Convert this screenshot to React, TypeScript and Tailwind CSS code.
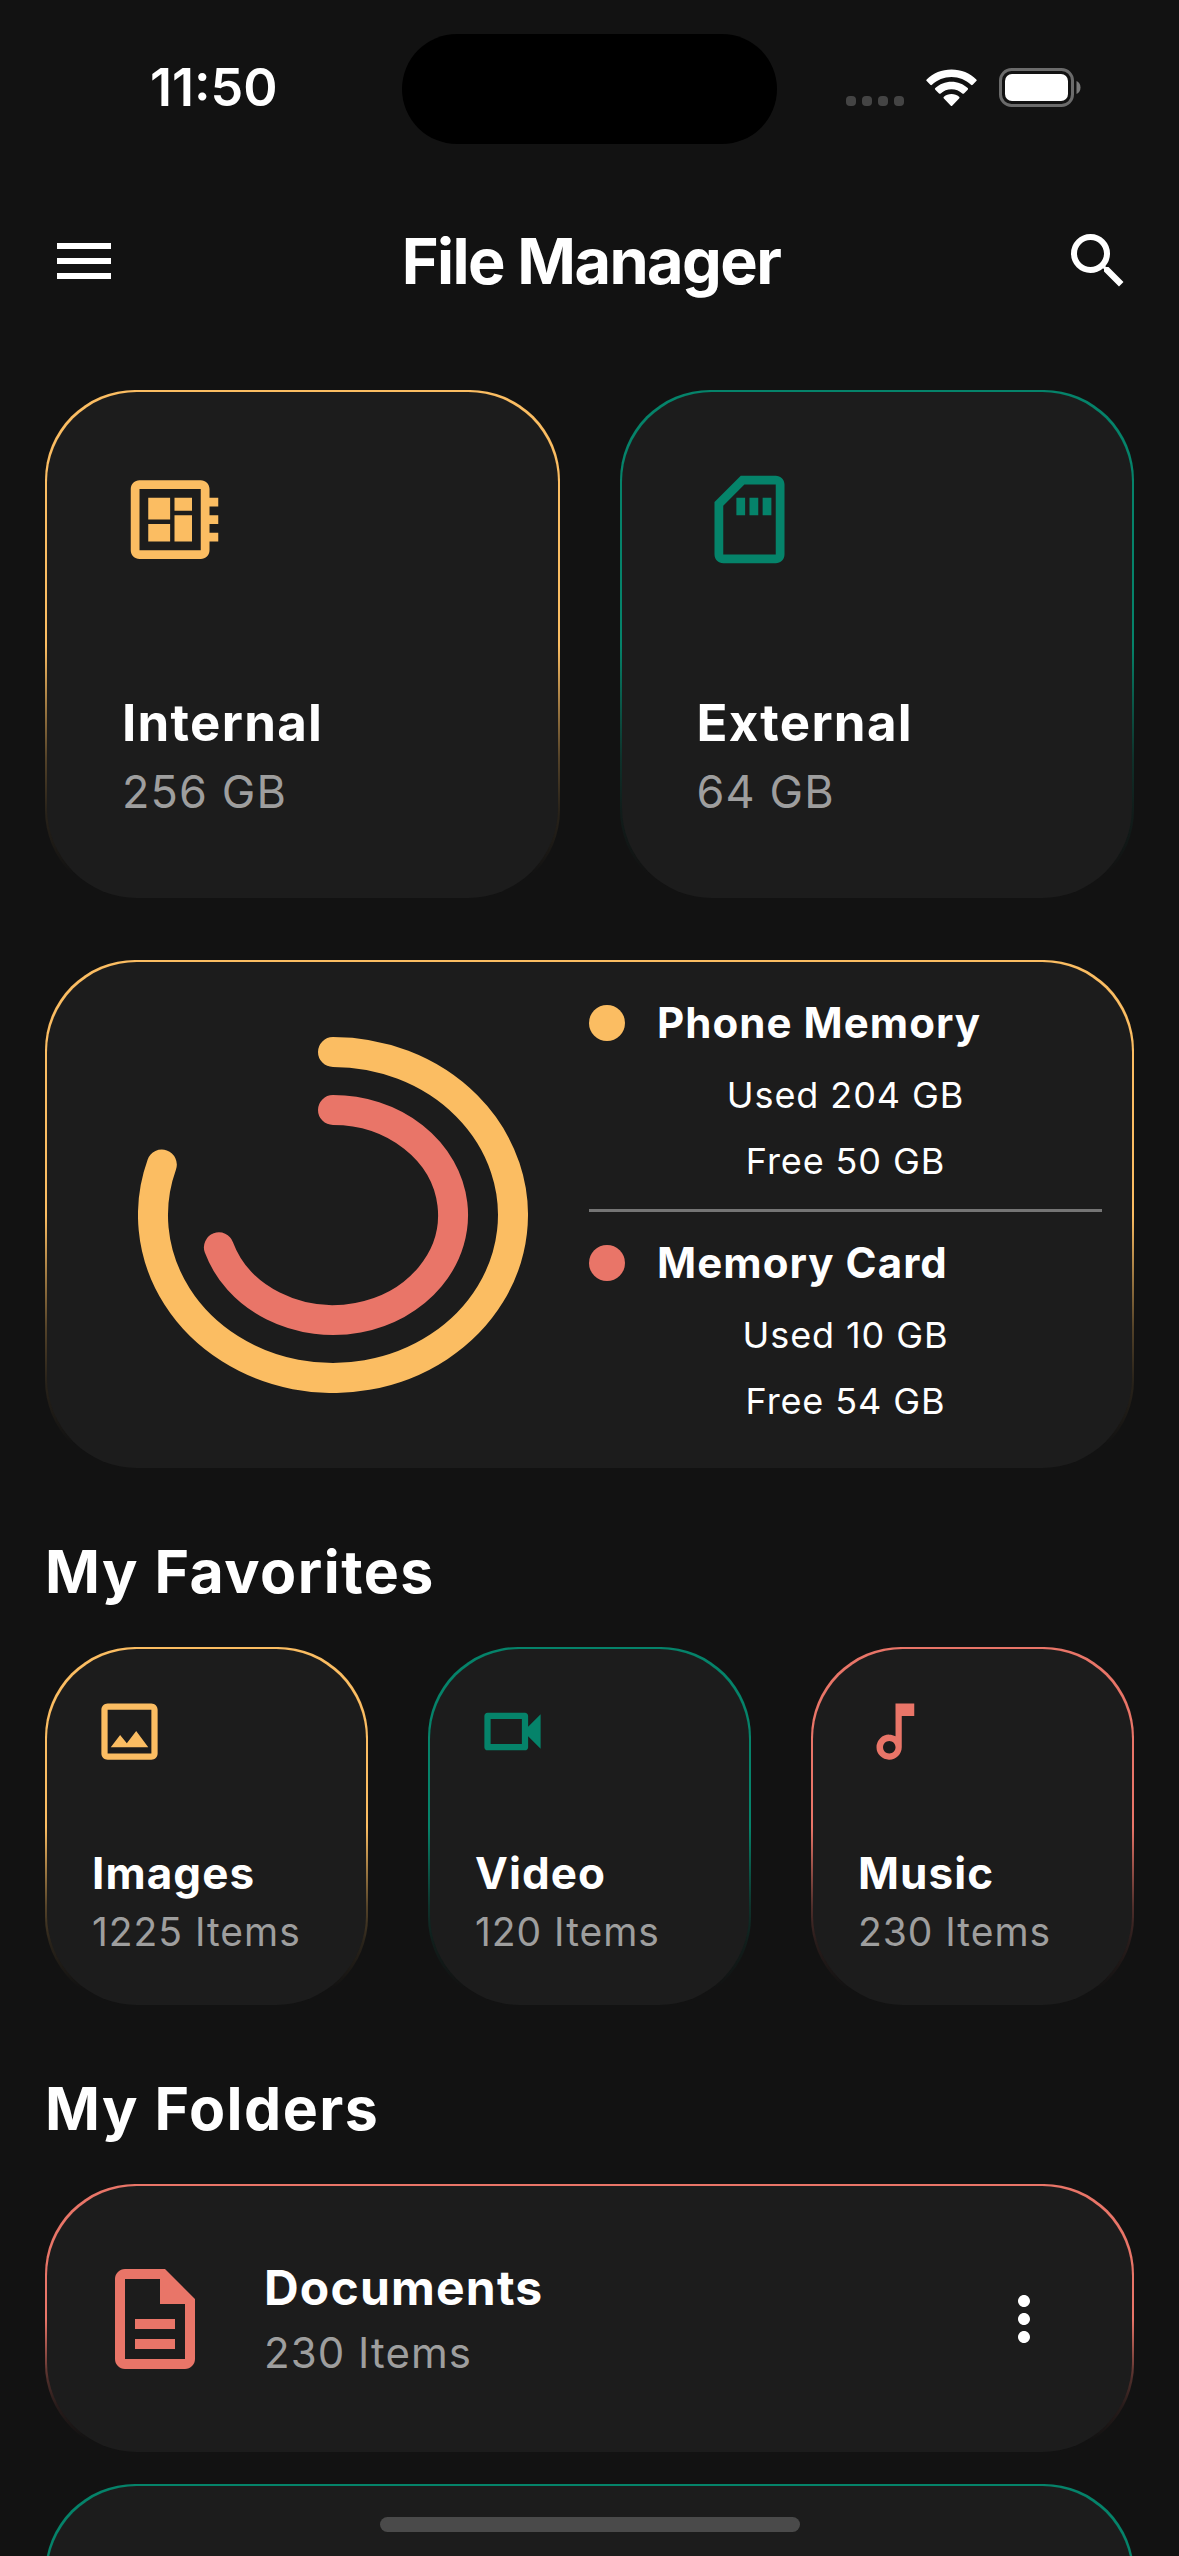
import type { ReactNode } from "react";
import type { IconType } from "react-icons";
import {
  MdMenu,
  MdMoreVert,
  MdOutlineDescription,
  MdOutlineDeveloperBoard,
  MdOutlineImage,
  MdOutlineMusicNote,
  MdOutlineSdCard,
  MdOutlineVideocam,
  MdSearch,
} from "react-icons/md";

type Tone = "amber" | "green" | "coral";

const toneBorder: Record<Tone, string> = {
  amber:
    "bg-[linear-gradient(to_bottom,#fbbd62_50%,#fbbd6299_62%,#fbbd6248_72%,#fbbd621a_82%,#fbbd6200_95%)]",
  green:
    "bg-[linear-gradient(to_bottom,#05836a_50%,#05836a99_62%,#05836a48_72%,#05836a1a_82%,#05836a00_95%)]",
  coral:
    "bg-[linear-gradient(to_bottom,#e97568_50%,#e9756899_62%,#e9756848_72%,#e975681a_82%,#e9756800_95%)]",
};

const toneText: Record<Tone, string> = {
  amber: "text-[#fbbd62]",
  green: "text-[#05836a]",
  coral: "text-[#e97568]",
};

const toneDot: Record<Tone, string> = {
  amber: "bg-[#fbbd62]",
  green: "bg-[#05836a]",
  coral: "bg-[#e97568]",
};

function Card({ tone, className, children }: { tone: Tone; className: string; children?: ReactNode }) {
  return (
    <div className={`rounded-[90px] p-[2px] ${toneBorder[tone]}`}>
      <div className={`rounded-[90px] bg-[#1c1c1c] ${className}`}>{children}</div>
    </div>
  );
}

function StatusBar() {
  return (
    <div className="grid h-[178px] grid-cols-3 items-start">
      <div className="pt-[58px] pl-[150px] text-[52px] leading-[60px] font-semibold">11:50</div>
      <div className="mt-[34px] h-[110px] w-[375px] justify-self-center rounded-full bg-black" />
      <div className="flex items-end justify-end gap-[22px] pt-[68px] pr-[98px]">
        <div className="flex gap-[6px] pb-px">
          <span className="size-[10px] rounded-[4px] bg-[#444444]" />
          <span className="size-[10px] rounded-[4px] bg-[#444444]" />
          <span className="size-[10px] rounded-[4px] bg-[#444444]" />
          <span className="size-[10px] rounded-[4px] bg-[#444444]" />
        </div>
        <svg width="51" height="38" viewBox="0 0 51 38" fill="white" aria-label="Wi-Fi">
          <path d="M25.500 0.500 C35.200 0.500 44 4.200 50.300 10.400 a1.200 1.200 0 0 1 0 1.700 L46.700 15.700 a1.200 1.200 0 0 1 -1.700 0 C39.800 10.800 33 7.900 25.500 7.900 C18 7.900 11.200 10.800 6 15.700 a1.200 1.200 0 0 1 -1.700 0 L0.700 12.100 a1.200 1.200 0 0 1 0 -1.700 C7 4.200 15.800 0.500 25.500 0.500 Z" />
          <path d="M25.500 12.800 C31.700 12.800 37.400 15.200 41.700 19.100 a1.200 1.200 0 0 1 0 1.700 L38 24.400 a1.200 1.200 0 0 1 -1.700 0 C33.400 21.800 29.600 20.200 25.500 20.200 C21.400 20.200 17.600 21.800 14.700 24.400 a1.200 1.200 0 0 1 -1.700 0 L9.300 20.800 a1.200 1.200 0 0 1 0 -1.700 C13.600 15.200 19.300 12.800 25.500 12.800 Z" />
          <path d="M25.500 25 C28.400 25 31 26 33.100 27.700 a1.200 1.200 0 0 1 0 1.800 L26.400 36.400 a1.200 1.200 0 0 1 -1.800 0 L17.900 29.500 a1.200 1.200 0 0 1 0 -1.800 C20 26 22.600 25 25.500 25 Z" />
        </svg>
        <svg width="82" height="39" viewBox="0 0 82 39" aria-label="Battery">
          <rect x="1.500" y="1.500" width="72" height="36" rx="11" fill="none" stroke="#6b6b6b" strokeWidth="3" />
          <rect x="6" y="6" width="63" height="27" rx="7" fill="white" />
          <path d="M77.500 13 C80 14 81.500 16.500 81.500 19.500 S80 25 77.500 26 Z" fill="#7a7a7a" />
        </svg>
      </div>
    </div>
  );
}

function AppBar() {
  return (
    <header className="flex items-center justify-between px-[45px] pt-[47px] pb-[93px]">
      <button type="button" aria-label="Open menu" className="pl-[3px]">
        <MdMenu className="size-[72px]" />
      </button>
      <h1 className="text-[63px] leading-[72px] font-bold tracking-tight">File Manager</h1>
      <button type="button" aria-label="Search">
        <MdSearch className="size-[72px]" />
      </button>
    </header>
  );
}

function StorageCard({ tone, icon: Icon, name, size }: { tone: Tone; icon: IconType; name: string; size: string }) {
  return (
    <Card tone={tone} className="flex flex-col px-[75px] pt-[75px] pb-[73px]">
      <Icon className={`size-[105px] ${toneText[tone]}`} />
      <h2 className="mt-[118px] text-[51px] leading-[66px] font-bold tracking-wide">{name}</h2>
      <p className="mt-[3px] text-[45px] leading-[66px] tracking-wide text-[#9e9e9e]">{size}</p>
    </Card>
  );
}

function UsageChart() {
  return (
    <svg width="390" height="356" viewBox="0 0 390 356" fill="none" strokeWidth="30" strokeLinecap="round" role="img" aria-label="Storage usage">
      <path d="M195 15 A180 163 0 1 1 23.800 127.600" stroke="#fbbd62" />
      <path d="M195 73 A120 105 0 1 1 80.900 210.400" stroke="#e97568" />
    </svg>
  );
}

function UsageBlock({ tone, name, used, free }: { tone: Tone; name: string; used: string; free: string }) {
  return (
    <div>
      <div className="flex items-center gap-[32px]">
        <span className={`size-[36px] rounded-full ${toneDot[tone]}`} />
        <h3 className="text-[42px] leading-[60px] font-bold tracking-wide">{name}</h3>
      </div>
      <div className="mt-[9px] text-center text-[36px] leading-[66px] tracking-wide">
        <p>{used}</p>
        <p>{free}</p>
      </div>
    </div>
  );
}

function FavoriteCard({ tone, icon: Icon, name, count }: { tone: Tone; icon: IconType; name: string; count: string }) {
  return (
    <Card tone={tone} className="flex flex-col px-[45px] pt-[45px] pb-[45px]">
      <Icon className={`size-[75px] ${toneText[tone]}`} />
      <h3 className="mt-[74px] text-[44px] leading-[60px] font-bold tracking-wide">{name}</h3>
      <p className="text-[39px] leading-[57px] tracking-wide whitespace-nowrap text-[#9e9e9e]">{count}</p>
    </Card>
  );
}

function SectionTitle({ children }: { children: ReactNode }) {
  return <h2 className="text-[59px] leading-[72px] font-bold tracking-wide">{children}</h2>;
}

export default function App() {
  return (
    <div className="relative h-screen overflow-hidden bg-[#121212] font-['Inter',sans-serif] text-white">
      <StatusBar />
      <AppBar />
      <main className="px-[45px]">
        <section className="grid grid-cols-2 gap-[60px]">
          <StorageCard tone="amber" icon={MdOutlineDeveloperBoard} name="Internal" size="256 GB" />
          <StorageCard tone="green" icon={MdOutlineSdCard} name="External" size="64 GB" />
        </section>

        <section className="mt-[60px]">
          <Card tone="amber" className="flex h-[506px] items-center pr-[30px]">
            <div className="flex flex-1 justify-center pl-[30px]">
              <UsageChart />
            </div>
            <div className="w-[513px] pb-[4px]">
              <UsageBlock tone="amber" name="Phone Memory" used="Used 204 GB" free="Free 50 GB" />
              <hr className="mt-[15px] mb-[21px] border-t-[3px] border-[#757575]" />
              <UsageBlock tone="coral" name="Memory Card" used="Used 10 GB" free="Free 54 GB" />
            </div>
          </Card>
        </section>

        <section className="mt-[66px]">
          <SectionTitle>My Favorites</SectionTitle>
          <div className="mt-[39px] grid grid-cols-3 gap-[60px]">
            <FavoriteCard tone="amber" icon={MdOutlineImage} name="Images" count="1225 Items" />
            <FavoriteCard tone="green" icon={MdOutlineVideocam} name="Video" count="120 Items" />
            <FavoriteCard tone="coral" icon={MdOutlineMusicNote} name="Music" count="230 Items" />
          </div>
        </section>

        <section className="mt-[66px]">
          <SectionTitle>My Folders</SectionTitle>
          <div className="mt-[39px] flex flex-col gap-[30px]">
            <Card tone="coral" className="flex h-[266px] items-center pr-[72px] pl-[48px]">
              <MdOutlineDescription className="size-[120px] text-[#e97568]" />
              <div className="ml-[49px] flex-1">
                <h3 className="text-[48px] leading-[66px] font-bold tracking-wide">Documents</h3>
                <p className="text-[42px] leading-[63px] tracking-wide text-[#9e9e9e]">230 Items</p>
              </div>
              <button type="button" aria-label="More options">
                <MdMoreVert className="size-[72px]" />
              </button>
            </Card>
            <Card tone="green" className="h-[266px]" />
          </div>
        </section>
      </main>
      <div className="absolute bottom-[24px] left-1/2 h-[15px] w-[420px] -translate-x-1/2 rounded-full bg-[#4a4a4a]" />
    </div>
  );
}
